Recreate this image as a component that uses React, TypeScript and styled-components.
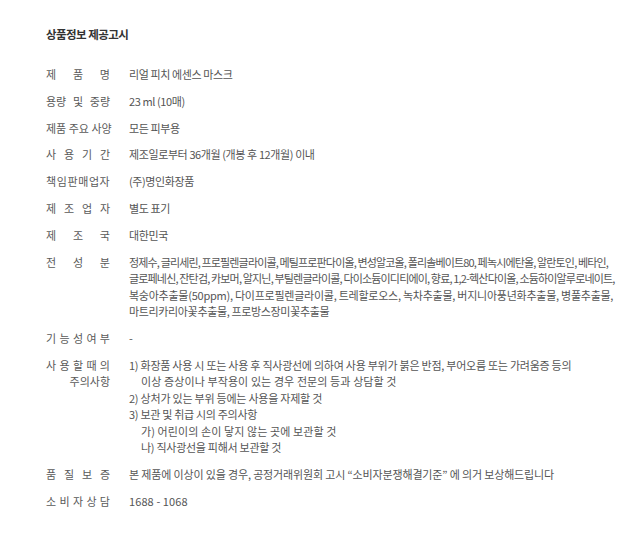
import React from "react";
import styled, { createGlobalStyle } from "styled-components";

const Global = createGlobalStyle`
  html, body { margin: 0; padding: 0; background: #fff; }
  body { font-family: "Noto Sans CJK KR", "Noto Sans", sans-serif; }
`;

const Page = styled.div`
  padding: 26px 20px 40px 46px;
  color: #555;
`;

const Title = styled.h2`
  margin: 0 0 24px 0;
  font-size: 11.5px;
  font-weight: 700;
  color: #333;
  line-height: 16px;
  letter-spacing: -0.55px;
`;

const Table = styled.div`
  display: grid;
  grid-template-columns: 64px 1fr;
  column-gap: 19px;
  row-gap: 10.3px;
  font-size: 11px;
  line-height: 16.5px;
`;

const Label = styled.div<{ $ls?: number }>`
  text-align: justify;
  text-align-last: justify;
  white-space: nowrap;
  letter-spacing: ${(p) => p.$ls ?? 0}px;
  color: #5a5a5a;
`;

const LabelLine = styled.div<{ $right?: boolean }>`
  text-align: ${(p) => (p.$right ? "right" : "justify")};
  text-align-last: ${(p) => (p.$right ? "right" : "justify")};
`;

const Value = styled.div`
  white-space: nowrap;
  letter-spacing: -0.4px;
`;

const Line = styled.div<{ $indent?: number; $ls?: number }>`
  padding-left: ${(p) => p.$indent ?? 0}px;
  letter-spacing: ${(p) => p.$ls ?? -0.4}px;
`;

type Row = { label: string; ls?: number; lines: { text: string; ls?: number; indent?: number }[] };

const rows: Row[] = [
  { label: "제 품 명", lines: [{ text: "리얼 피치 에센스 마스크" }] },
  { label: "용량 및 중량", lines: [{ text: "23 ml (10매)" }] },
  { label: "제품 주요 사양", lines: [{ text: "모든 피부용" }] },
  { label: "사 용 기 간", lines: [{ text: "제조일로부터 36개월 (개봉 후 12개월) 이내" }] },
  { label: "책임판매업자", ls: 0.6, lines: [{ text: "(주)명인화장품" }] },
  { label: "제 조 업 자", lines: [{ text: "별도 표기" }] },
  { label: "제 조 국", lines: [{ text: "대한민국" }] },
  {
    label: "전 성 분",
    lines: [
      { text: "정제수, 글리세린, 프로필렌글라이콜, 메틸프로판다이올, 변성알코올, 폴리솔베이트80, 페녹시에탄올, 알란토인, 베타인,", ls: -0.85 },
      { text: "글로페네신, 잔탄검, 카보머, 알지닌, 부틸렌글라이콜, 다이소듐이디티에이, 향료, 1,2-헥산다이올, 소듐하이알루로네이트,", ls: -0.83 },
      { text: "복숭아추출물(50ppm), 다이프로필렌글라이콜, 트레할로오스, 녹차추출물, 버지니아풍년화추출물, 병풀추출물,", ls: -0.25 },
      { text: "마트리카리아꽃추출물, 프로방스장미꽃추출물", ls: -0.35 },
    ],
  },
  { label: "기 능 성 여 부", lines: [{ text: "-" }] },
];

export default function App() {
  return (
    <>
      <Global />
      <Page>
        <Title>상품정보 제공고시</Title>
        <Table>
          {rows.map((r) => (
            <React.Fragment key={r.label}>
              <Label $ls={r.ls}>{r.label}</Label>
              <Value>
                {r.lines.map((l, i) => (
                  <Line key={i} $ls={l.ls} $indent={l.indent}>
                    {l.text}
                  </Line>
                ))}
              </Value>
            </React.Fragment>
          ))}
          <Label>
            <LabelLine>사 용 할 때 의</LabelLine>
            <LabelLine $right>주의사항</LabelLine>
          </Label>
          <Value>
            <Line $ls={-0.25}>1) 화장품 사용 시 또는 사용 후 직사광선에 의하여 사용 부위가 붉은 반점, 부어오름 또는 가려움증 등의</Line>
            <Line $indent={12} $ls={0.1}>이상 증상이나 부작용이 있는 경우 전문의 등과 상담할 것</Line>
            <Line $ls={-0.23}>2) 상처가 있는 부위 등에는 사용을 자제할 것</Line>
            <Line $ls={-0.3}>3) 보관 및 취급 시의 주의사항</Line>
            <Line $indent={12} $ls={0.1}>가) 어린이의 손이 닿지 않는 곳에 보관할 것</Line>
            <Line $indent={12} $ls={-0.28}>나) 직사광선을 피해서 보관할 것</Line>
          </Value>
          <Label>품 질 보 증</Label>
          <Value>
            <Line $ls={-0.15}>본 제품에 이상이 있을 경우, 공정거래위원회 고시 “소비자분쟁해결기준” 에 의거 보상해드립니다</Line>
          </Value>
          <Label>소 비 자 상 담</Label>
          <Value>
            <Line $ls={0.1}>1688 - 1068</Line>
          </Value>
        </Table>
      </Page>
    </>
  );
}
